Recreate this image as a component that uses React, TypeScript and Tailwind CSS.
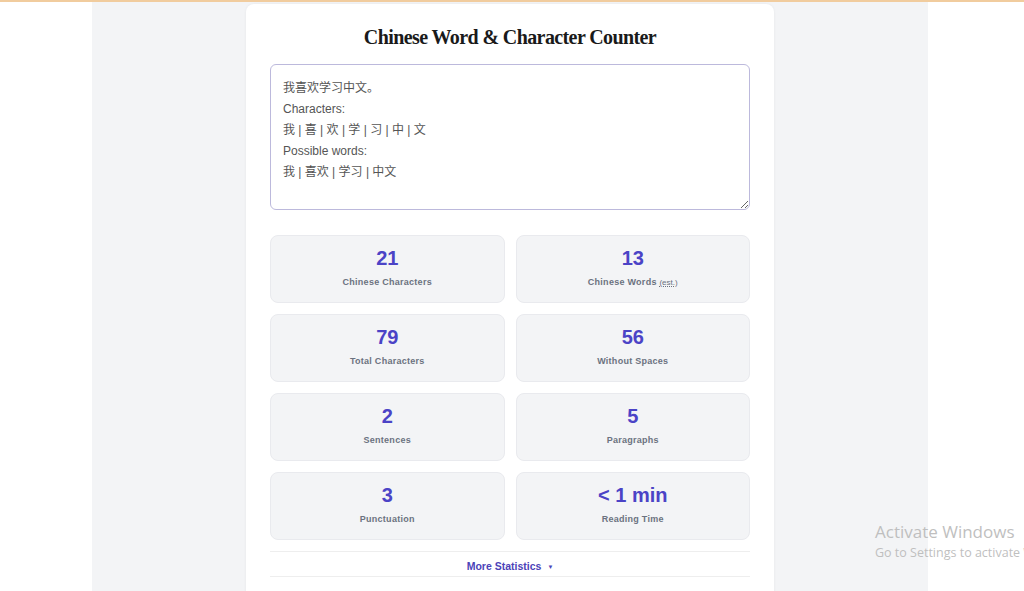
import React from "react";

const sampleText = `我喜欢学习中文。
Characters:
我 | 喜 | 欢 | 学 | 习 | 中 | 文
Possible words:
我 | 喜欢 | 学习 | 中文`;

type Stat = { value: string; label: string; est?: boolean };

const stats: Stat[] = [
  { value: "21", label: "Chinese Characters" },
  { value: "13", label: "Chinese Words", est: true },
  { value: "79", label: "Total Characters" },
  { value: "56", label: "Without Spaces" },
  { value: "2", label: "Sentences" },
  { value: "5", label: "Paragraphs" },
  { value: "3", label: "Punctuation" },
  { value: "< 1 min", label: "Reading Time" },
];

function StatCard({ stat }: { stat: Stat }) {
  return (
    <div className="h-[68px] rounded-lg border border-[#e9eaee] bg-[#f3f4f6] flex flex-col items-center pt-[9px]">
      <div className="text-[20px] leading-[26px] font-bold text-[#4b43c6]">{stat.value}</div>
      <div className="mt-[4px] text-[9px] leading-[14px] font-bold tracking-[0.03em] text-[#6b7280]">
        {stat.label}
        {stat.est && (
          <>
            {" "}
            <span className="font-normal underline decoration-dotted text-[8px] tracking-normal">(est.)</span>
          </>
        )}
      </div>
    </div>
  );
}

export default function App() {
  return (
    <div
      className="relative h-[591px] w-full overflow-hidden bg-white border-t-2 border-[#f1cc9e]"
      style={{ fontFamily: '"Liberation Sans", Arial, "Noto Sans CJK SC", sans-serif' }}
    >
      <div className="ml-[92px] w-[836px] h-full bg-[#f3f4f6] pt-[2px]">
        <main className="ml-[154px] w-[528px] h-[600px] bg-white rounded-t-lg shadow-[0_0_3px_rgba(0,0,0,0.06)] px-6 pt-[19px]">
          <h1
            className="text-center text-[20px] leading-7 font-bold tracking-[-0.03em] text-[#1a1a1a]"
            style={{ fontFamily: '"Liberation Serif", "Times New Roman", serif' }}
          >
            Chinese Word &amp; Character Counter
          </h1>
          <textarea
            readOnly
            value={sampleText}
            className="mt-[13px] block w-full h-[146px] rounded-md border border-[#bcb9dc] px-3 pt-[13px] pb-[9px] text-[12px] leading-[21px] text-[#555] outline-none"
            style={{ fontFamily: '"Liberation Sans", Arial, "Noto Sans CJK SC", sans-serif' }}
          />
          <div className="mt-[25px] grid grid-cols-2 gap-[11px]">
            {stats.map((s) => (
              <StatCard key={s.label} stat={s} />
            ))}
          </div>
          <div className="mt-[11px] h-[26px] border-y border-[#eeeeee] flex items-center justify-center gap-[6px] pt-[6px] text-[10.5px] font-bold text-[#4b43b8]">
            <span>More Statistics</span>
            <span className="text-[6px]">▼</span>
          </div>
        </main>
      </div>

      <div
        className="absolute left-[875px] top-[518px] whitespace-nowrap text-[#bfbfbf]"
        style={{ fontFamily: '"Open Sans", "Noto Sans", sans-serif' }}
      >
        <div className="text-[17px] leading-[24px]">Activate Windows</div>
        <div className="text-[12.5px] leading-[18px]">Go to Settings to activate Windows.</div>
      </div>
    </div>
  );
}
